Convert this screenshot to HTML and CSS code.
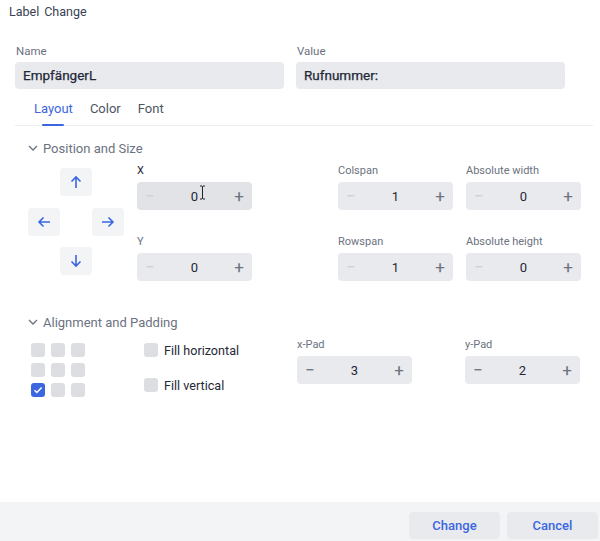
FILE: index.html
```html
<!DOCTYPE html>
<html>
<head>
<meta charset="utf-8">
<link rel="stylesheet" href="styles.css">
</head>
<body>
<div class="page">
  <div class="title"><span>Label</span><span>Change</span></div>
  <div class="main">
    <div class="top-fields">
      <div class="field">
        <div class="flabel">Name</div>
        <div class="text-input">EmpfängerL</div>
      </div>
      <div class="field">
        <div class="flabel">Value</div>
        <div class="text-input">Rufnummer:</div>
      </div>
    </div>
    <div class="tabs">
      <div class="tab active">Layout</div>
      <div class="tab">Color</div>
      <div class="tab">Font</div>
    </div>

    <div class="section">
      <div class="sec-head">
        <svg class="chev" width="10" height="6" viewBox="0 0 10 6"><path d="M1 1l4 4 4-4" fill="none" stroke="#6b7280" stroke-width="1.3"/></svg>
        <span>Position and Size</span>
      </div>
      <div class="pos-body">
        <div class="pad">
          <div class="abtn up"><svg width="12" height="14" viewBox="0 0 12 14"><path d="M6 13V2M1.5 6.5L6 2l4.5 4.5" fill="none" stroke="#3b66e0" stroke-width="1.6"/></svg></div>
          <div class="abtn left"><svg width="14" height="12" viewBox="0 0 14 12"><path d="M13 6H2M6.5 1.5L2 6l4.5 4.5" fill="none" stroke="#3b66e0" stroke-width="1.6"/></svg></div>
          <div class="abtn right"><svg width="14" height="12" viewBox="0 0 14 12"><path d="M1 6h11M7.5 1.5L12 6l-4.5 4.5" fill="none" stroke="#3b66e0" stroke-width="1.6"/></svg></div>
          <div class="abtn down"><svg width="12" height="14" viewBox="0 0 12 14"><path d="M6 1v11M1.5 7.5L6 12l4.5-4.5" fill="none" stroke="#3b66e0" stroke-width="1.6"/></svg></div>
        </div>
        <div class="col xy">
          <div class="field">
            <div class="slabel dark">X</div>
            <div class="stepper hover">
              <span class="op dis">−</span><span class="val">0</span><span class="op">+</span>
              <svg class="cursor" width="7" height="15" viewBox="0 0 7 15"><path d="M1 1h2l.5.6L4 1h2M3.5 1.6v11.8M1 14h2l.5-.6L4 14h2" fill="none" stroke="#222" stroke-width="1"/></svg>
            </div>
          </div>
          <div class="field">
            <div class="slabel">Y</div>
            <div class="stepper"><span class="op dis">−</span><span class="val">0</span><span class="op">+</span></div>
          </div>
        </div>
        <div class="col span">
          <div class="field">
            <div class="slabel">Colspan</div>
            <div class="stepper"><span class="op dis">−</span><span class="val">1</span><span class="op">+</span></div>
          </div>
          <div class="field">
            <div class="slabel">Rowspan</div>
            <div class="stepper"><span class="op dis">−</span><span class="val">1</span><span class="op">+</span></div>
          </div>
        </div>
        <div class="col abs">
          <div class="field">
            <div class="slabel">Absolute width</div>
            <div class="stepper"><span class="op dis">−</span><span class="val">0</span><span class="op">+</span></div>
          </div>
          <div class="field">
            <div class="slabel">Absolute height</div>
            <div class="stepper"><span class="op dis">−</span><span class="val">0</span><span class="op">+</span></div>
          </div>
        </div>
      </div>
    </div>

    <div class="section align-sec">
      <div class="sec-head">
        <svg class="chev" width="10" height="6" viewBox="0 0 10 6"><path d="M1 1l4 4 4-4" fill="none" stroke="#6b7280" stroke-width="1.3"/></svg>
        <span>Alignment and Padding</span>
      </div>
      <div class="align-body">
        <div class="agrid">
          <div class="cb"></div><div class="cb"></div><div class="cb"></div>
          <div class="cb"></div><div class="cb"></div><div class="cb"></div>
          <div class="cb checked"><svg width="10" height="8" viewBox="0 0 10 8"><path d="M1.5 4.2l2.4 2.3L8.6 1.6" fill="none" stroke="#fff" stroke-width="1.5"/></svg></div><div class="cb"></div><div class="cb"></div>
        </div>
        <div class="fills">
          <label class="fill"><span class="cb"></span><span>Fill horizontal</span></label>
          <label class="fill"><span class="cb"></span><span>Fill vertical</span></label>
        </div>
        <div class="field xpad">
          <div class="slabel">x-Pad</div>
          <div class="stepper"><span class="op">−</span><span class="val">3</span><span class="op">+</span></div>
        </div>
        <div class="field ypad">
          <div class="slabel">y-Pad</div>
          <div class="stepper"><span class="op">−</span><span class="val">2</span><span class="op">+</span></div>
        </div>
      </div>
    </div>
  </div>
  <div class="footer">
    <button class="btn">Change</button>
    <button class="btn">Cancel</button>
  </div>
</div>
</body>
</html>
```

FILE: styles.css
```css
* { box-sizing: border-box; }
html, body { margin: 0; padding: 0; background: #fff; }
body {
  font-family: Roboto, "Liberation Sans", sans-serif;
  color: #1f2937;
}
.page {
  width: 600px;
  height: 541px;
  display: flex;
  flex-direction: column;
}
.title {
  padding: 4px 9px 0;
  height: 24px;
  font-size: 12.5px;
  line-height: 16px;
  color: #374151;
  display: flex;
  gap: 5px;
}
.main {
  flex: 1;
  padding: 0 7px 0 15px;
}
.top-fields {
  display: grid;
  grid-template-columns: 269px 269px;
  column-gap: 12px;
  margin-top: 20px;
}
.flabel {
  font-size: 11.5px;
  line-height: 14px;
  color: #6b7280;
  margin: 0 0 4px 1px;
}
.text-input {
  height: 27px;
  background: #e9eaee;
  border-radius: 4px;
  padding: 0 8px;
  font-size: 13.5px;
  font-weight: 400;
  -webkit-text-stroke: 0.25px #1f2937;
  line-height: 27px;
  color: #1f2937;
}
.tabs {
  display: flex;
  margin-top: 7px;
  padding-left: 19px;
  border-bottom: 1px solid #eceef1;
  height: 30px;
}
.tab {
  position: relative;
  font-size: 13px;
  line-height: 24px;
  padding-top: 1px;
  color: #4b5563;
  margin-right: 17px;
}
.tab.active { color: #3b66e0; }
.tab.active::after {
  content: "";
  position: absolute;
  left: 50%;
  bottom: -1px;
  width: 22px;
  margin-left: -11px;
  height: 2px;
  background: #3b66e0;
  border-radius: 1px;
}
.section { padding-left: 13px; }
.sec-head {
  display: flex;
  align-items: center;
  height: 16px;
  margin-top: 14px;
  font-size: 13px;
  color: #6b7280;
}
.chev { margin-right: 5px; }
.pos-body {
  display: flex;
  margin-top: 8px;
}
.pad {
  display: grid;
  grid-template-columns: 32px 32px 32px;
  grid-template-rows: 28px 28px 28px;
  row-gap: 11.5px;
  margin-top: 4px;
  width: 96px;
}
.abtn {
  background: #f3f4f6;
  border-radius: 4px;
  display: flex;
  align-items: center;
  justify-content: center;
}
.abtn.up { grid-column: 2; grid-row: 1; }
.abtn.left { grid-column: 1; grid-row: 2; }
.abtn.right { grid-column: 3; grid-row: 2; }
.abtn.down { grid-column: 2; grid-row: 3; }
.col {
  display: flex;
  flex-direction: column;
  gap: 25px;
  width: 115px;
}
.col.xy { margin-left: 13px; }
.col.span { margin-left: 86px; }
.col.abs { margin-left: 13px; }
.slabel {
  font-size: 11px;
  line-height: 14px;
  color: #6b7280;
  margin-bottom: 4px;
}
.slabel.dark { color: #1f2937; }
.stepper {
  position: relative;
  width: 115px;
  height: 28px;
  background: #e9eaee;
  border-radius: 4px;
  display: flex;
  align-items: center;
  justify-content: space-between;
  padding: 0 6px;
  font-size: 13px;
}
.stepper.hover { background: #e2e3e7; }
.op {
  width: 14px;
  text-align: center;
  color: #6b7280;
  font-size: 17px;
  line-height: 28px;
}
.op.dis { color: #cdd0d5; }
.val { color: #1f2937; font-size: 13px; }
.cursor {
  position: absolute;
  left: 62px;
  top: 3px;
}
.align-sec .sec-head { margin-top: 33px; }
.align-body {
  display: flex;
  margin-top: 8px;
}
.agrid {
  display: grid;
  grid-template-columns: 14px 14px 14px;
  grid-template-rows: 14px 14px 14px;
  gap: 6px;
  margin: 5px 0 0 3px;
}
.cb {
  width: 14px;
  height: 14px;
  border-radius: 3px;
  background: #dcdee2;
  display: flex;
  align-items: center;
  justify-content: center;
}
.cb.checked { background: #3b66e0; }
.fills {
  display: flex;
  flex-direction: column;
  gap: 21px;
  margin: 5px 0 0 59px;
  width: 153px;
}
.fill {
  display: flex;
  align-items: center;
  gap: 6px;
  font-size: 12.6px;
  color: #1f2937;
  height: 14px;
}
.fill .cb { flex: none; }
.xpad { width: 115px; }
.ypad { margin-left: 53px; width: 115px; }
.footer {
  height: 39px;
  background: #f3f4f6;
  display: flex;
  justify-content: flex-end;
  gap: 7px;
  padding: 10px 2px 0 0;
}
.btn {
  width: 91px;
  height: 27px;
  border: none;
  border-radius: 4px;
  background: #e9eaee;
  color: #3b66e0;
  font-family: Roboto, "Liberation Sans", sans-serif;
  font-size: 13px;
  font-weight: 500;
  padding: 0;
}
```
